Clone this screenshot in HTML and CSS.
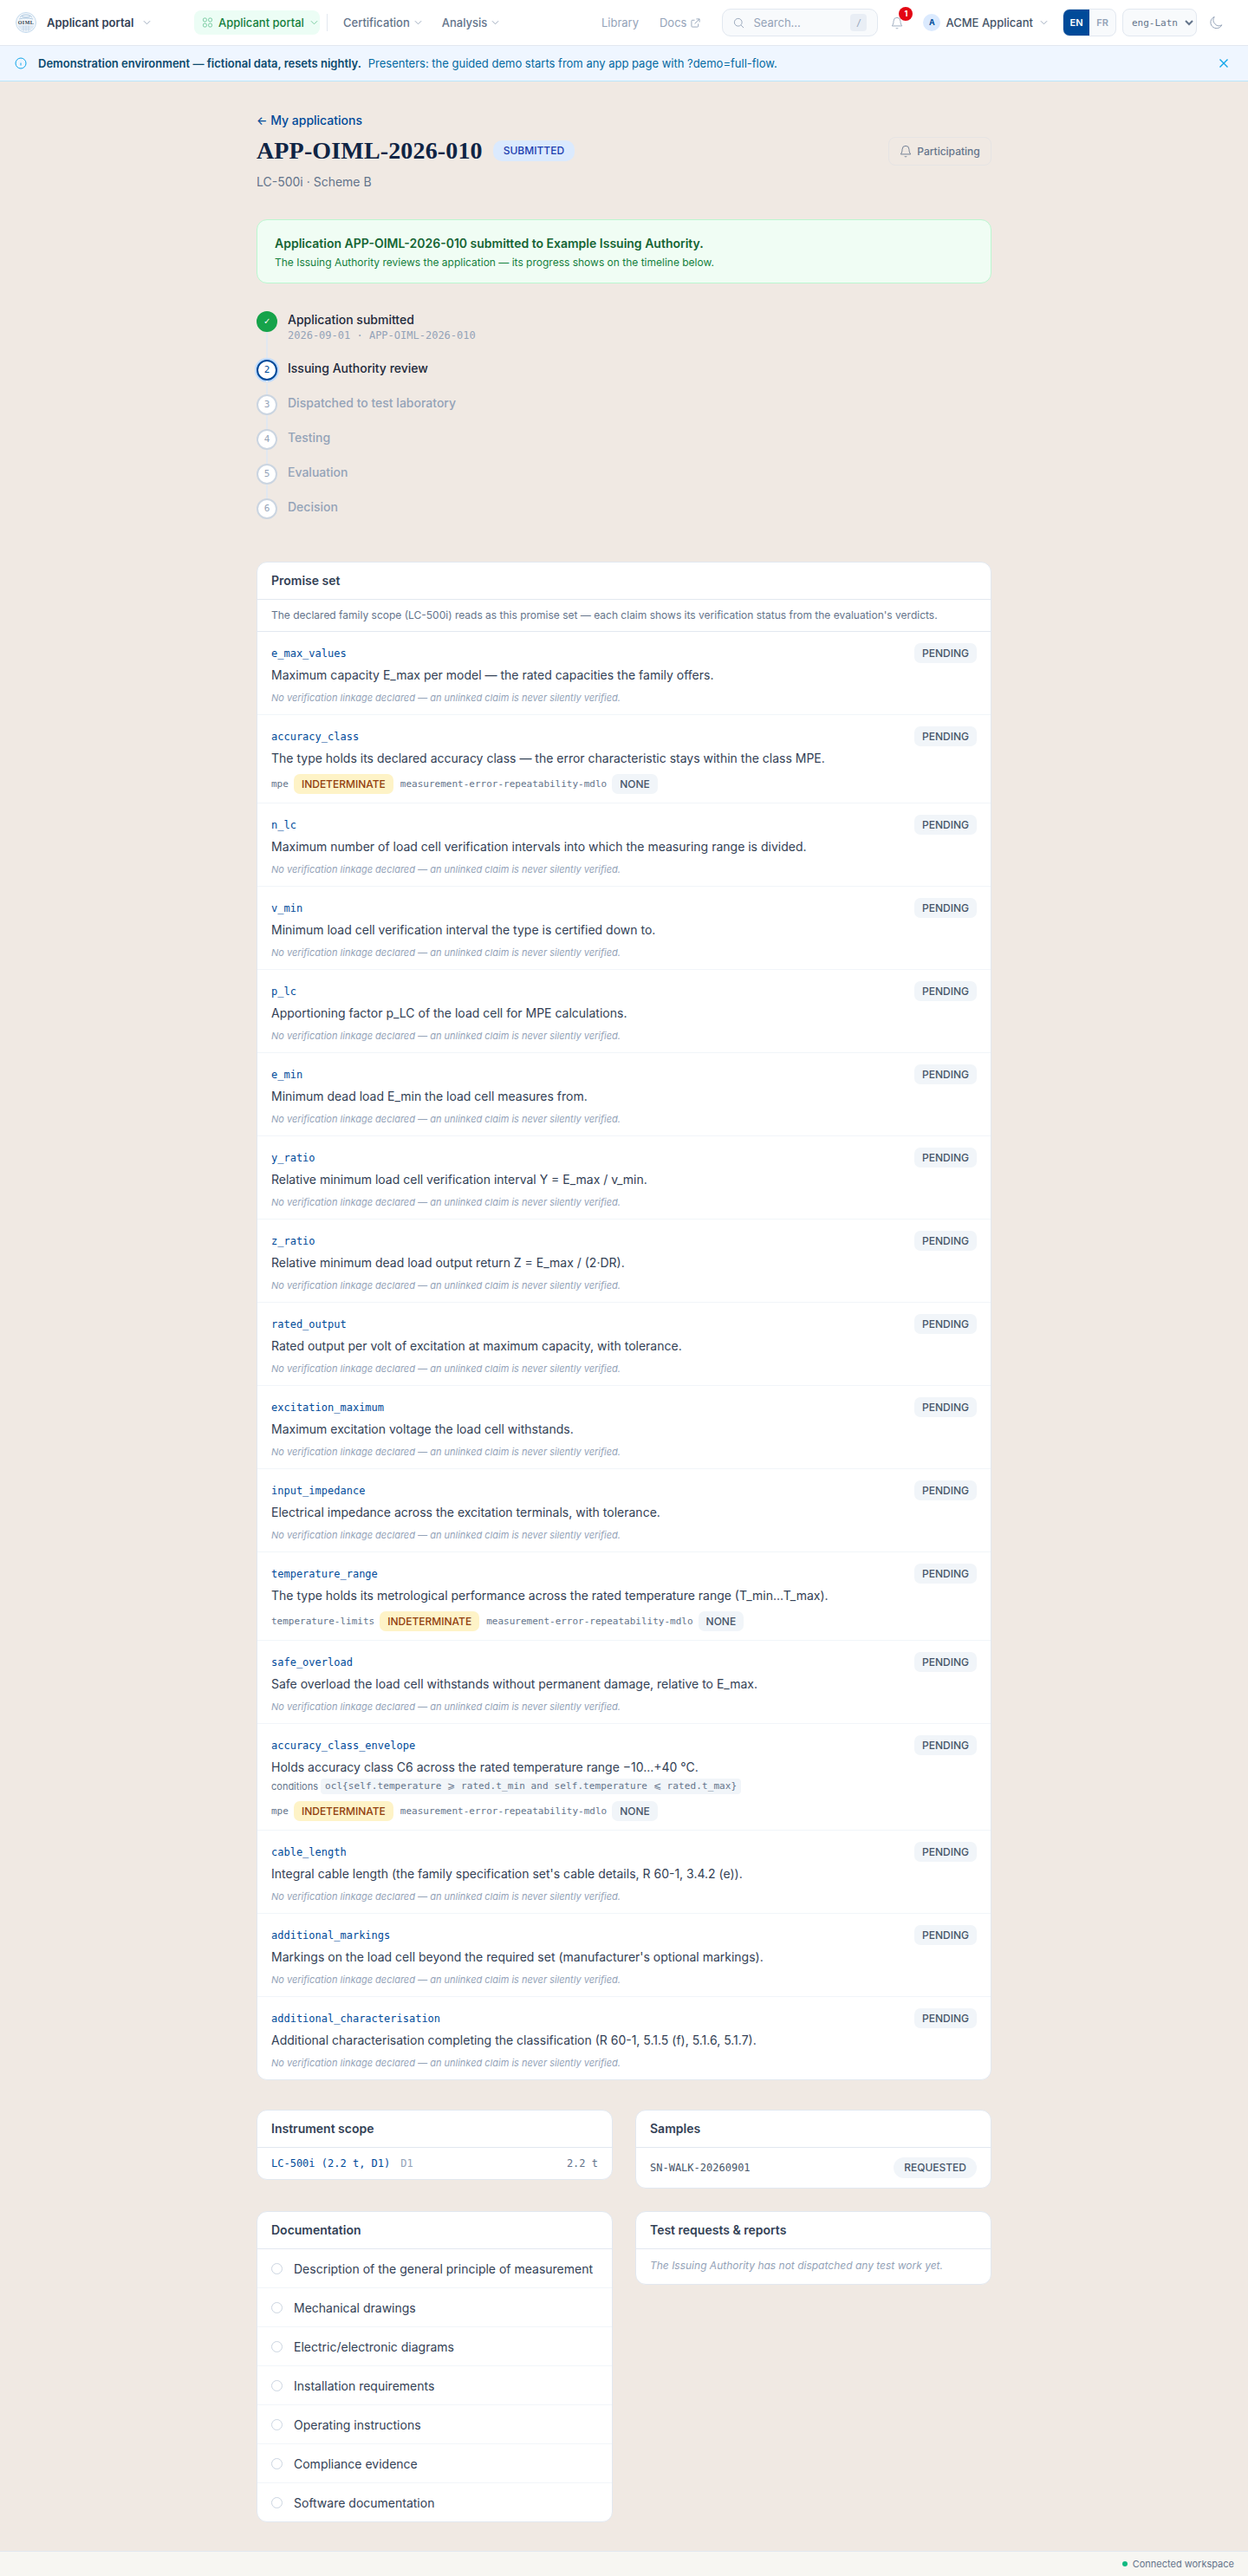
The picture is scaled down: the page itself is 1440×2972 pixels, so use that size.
FILE: index.html
```html
<!DOCTYPE html>
<html lang="en">
<head>
  <meta charset="UTF-8" />
  <meta name="viewport" content="width=device-width, initial-scale=1.0"/>
  <title>APP-OIML-2026-010</title>
  <link rel="stylesheet" href="styles.css">
</head>
<body>

  <header class="topbar">
    <div class="brand">
      <svg class="logo" viewBox="0 0 24 24">
        <circle cx="12" cy="12" r="11.5" fill="#f3f7fb" stroke="#c3d9ec" stroke-width="1"/>
        <path d="M5 6c3-4 11-4 14 0M7 4.500c3 2 7 2 10 0M4 8c4-1.500 12-1.500 16 0" fill="none" stroke="#7fa9cf" stroke-width=".6"/>
        <path d="M3 16h18M4 18h16M6 20h12M9 15.500v6.500M15 15.500v6.500M12 15.500v7" fill="none" stroke="#a5c3de" stroke-width=".5"/>
        <text x="12" y="13.800" text-anchor="middle" class="logo-text">OIML</text>
      </svg>
      <span class="brand-name">Applicant portal</span>
      <svg class="chev" viewBox="0 0 10 6"><path d="M1 1l4 4 4-4"/></svg>
    </div>
    <nav class="mainnav">
      <a class="nav-pill">
        <svg class="pill-icon" viewBox="0 0 14 14"><rect x="1.500" y="1.500" width="4.400" height="4.400" rx="2"/><rect x="8.100" y="1.500" width="4.400" height="4.400" rx="2"/><rect x="1.500" y="8.100" width="4.400" height="4.400" rx="2"/><rect x="8.100" y="8.100" width="4.400" height="4.400" rx="2"/></svg>
        <span>Applicant portal</span>
        <svg class="chev chev-green" viewBox="0 0 10 6"><path d="M1 1l4 4 4-4"/></svg>
      </a>
      <span class="nav-sep"></span>
      <a class="nav-link">Certification <svg class="chev" viewBox="0 0 10 6"><path d="M1 1l4 4 4-4"/></svg></a>
      <a class="nav-link">Analysis <svg class="chev" viewBox="0 0 10 6"><path d="M1 1l4 4 4-4"/></svg></a>
    </nav>
    <div class="topright">
      <a class="quiet-link">Library</a>
      <a class="quiet-link docs-link">Docs
        <svg class="ext" viewBox="0 0 12 12"><path d="M9.500 7v3a1 1 0 0 1-1 1H2a1 1 0 0 1-1-1V3.500a1 1 0 0 1 1-1h3M7 1h4v4M11 1L5 7"/></svg>
      </a>
      <div class="search">
        <svg class="search-icon" viewBox="0 0 14 14"><circle cx="6.200" cy="6.200" r="4.700"/><path d="M9.800 9.800L13 13"/></svg>
        <span class="search-text">Search...</span>
        <kbd class="slash">/</kbd>
      </div>
      <div class="bell-wrap">
        <svg class="bell" viewBox="0 0 16 18"><path d="M3.500 7a4.500 4.500 0 0 1 9 0c0 4 1.500 5.500 2 6.500h-13c.5-1 2-2.500 2-6.500zM6.500 16a1.700 1.700 0 0 0 3 0"/></svg>
        <span class="bell-badge">1</span>
      </div>
      <div class="user">
        <span class="avatar">A</span>
        <span class="user-name">ACME Applicant</span>
        <svg class="chev" viewBox="0 0 10 6"><path d="M1 1l4 4 4-4"/></svg>
      </div>
      <div class="langs"><span class="lang lang-on">EN</span><span class="lang">FR</span></div>
      <select class="script-select"><option>eng-Latn</option></select>
      <svg class="moon" viewBox="0 0 16 16"><path d="M13.800 10.800A6.500 6.500 0 0 1 5.200 1.500a6.800 6.800 0 1 0 8.600 9.300z"/></svg>
    </div>
  </header>

  <div class="banner">
    <svg class="info" viewBox="0 0 14 14"><circle cx="7" cy="7" r="6"/><path d="M7 6.500v3M7 4.500v.1"/></svg>
    <strong>Demonstration environment — fictional data, resets nightly.</strong>
    <span>Presenters: the guided demo starts from any app page with ?demo=full-flow.</span>
    <svg class="close" viewBox="0 0 12 12"><path d="M1.500 1.500l9 9M10.500 1.500l-9 9"/></svg>
  </div>

  <main class="page">
    <a class="back"><span class="back-arrow">←</span> My applications</a>

    <div class="title-row">
      <h1>APP-OIML-2026-010</h1>
      <span class="status-badge">SUBMITTED</span>
      <button class="watch">
        <svg class="watch-bell" viewBox="0 0 16 18"><path d="M3.500 7a4.500 4.500 0 0 1 9 0c0 4 1.500 5.500 2 6.500h-13c.5-1 2-2.500 2-6.500zM6.500 16a1.700 1.700 0 0 0 3 0"/></svg>
        Participating
      </button>
    </div>
    <p class="subtitle">LC-500i · Scheme B</p>

    <div class="success">
      <p class="success-title">Application APP-OIML-2026-010 submitted to Example Issuing Authority.</p>
      <p class="success-sub">The Issuing Authority reviews the application — its progress shows on the timeline below.</p>
    </div>

    <ol class="timeline">
      <li class="step step-done">
        <span class="dot">✓</span>
        <div class="step-body">
          <div class="step-name">Application submitted</div>
          <div class="step-meta">2026-09-01 · APP-OIML-2026-010</div>
        </div>
      </li>
      <li class="step step-now">
        <span class="dot">2</span>
        <div class="step-body"><div class="step-name">Issuing Authority review</div></div>
      </li>
      <li class="step">
        <span class="dot">3</span>
        <div class="step-body"><div class="step-name">Dispatched to test laboratory</div></div>
      </li>
      <li class="step">
        <span class="dot">4</span>
        <div class="step-body"><div class="step-name">Testing</div></div>
      </li>
      <li class="step">
        <span class="dot">5</span>
        <div class="step-body"><div class="step-name">Evaluation</div></div>
      </li>
      <li class="step">
        <span class="dot">6</span>
        <div class="step-body"><div class="step-name">Decision</div></div>
      </li>
    </ol>

    <section class="card promise">
      <h2 class="card-head">Promise set</h2>
      <p class="promise-note">The declared family scope (LC-500i) reads as this promise set — each claim shows its verification status from the evaluation's verdicts.</p>

      <div class="claim">
        <div class="claim-top"><code class="claim-id">e_max_values</code><span class="chip">PENDING</span></div>
        <p class="claim-text">Maximum capacity E_max per model — the rated capacities the family offers.</p>
        <p class="claim-none">No verification linkage declared — an unlinked claim is never silently verified.</p>
      </div>
      <div class="claim">
        <div class="claim-top"><code class="claim-id">accuracy_class</code><span class="chip">PENDING</span></div>
        <p class="claim-text">The type holds its declared accuracy class — the error characteristic stays within the class MPE.</p>
        <div class="links">
          <code class="link-name">mpe</code><span class="chip chip-amber">INDETERMINATE</span>
          <code class="link-name">measurement-error-repeatability-mdlo</code><span class="chip">NONE</span>
        </div>
      </div>
      <div class="claim">
        <div class="claim-top"><code class="claim-id">n_lc</code><span class="chip">PENDING</span></div>
        <p class="claim-text">Maximum number of load cell verification intervals into which the measuring range is divided.</p>
        <p class="claim-none">No verification linkage declared — an unlinked claim is never silently verified.</p>
      </div>
      <div class="claim">
        <div class="claim-top"><code class="claim-id">v_min</code><span class="chip">PENDING</span></div>
        <p class="claim-text">Minimum load cell verification interval the type is certified down to.</p>
        <p class="claim-none">No verification linkage declared — an unlinked claim is never silently verified.</p>
      </div>
      <div class="claim">
        <div class="claim-top"><code class="claim-id">p_lc</code><span class="chip">PENDING</span></div>
        <p class="claim-text">Apportioning factor p_LC of the load cell for MPE calculations.</p>
        <p class="claim-none">No verification linkage declared — an unlinked claim is never silently verified.</p>
      </div>
      <div class="claim">
        <div class="claim-top"><code class="claim-id">e_min</code><span class="chip">PENDING</span></div>
        <p class="claim-text">Minimum dead load E_min the load cell measures from.</p>
        <p class="claim-none">No verification linkage declared — an unlinked claim is never silently verified.</p>
      </div>
      <div class="claim">
        <div class="claim-top"><code class="claim-id">y_ratio</code><span class="chip">PENDING</span></div>
        <p class="claim-text">Relative minimum load cell verification interval Y = E_max / v_min.</p>
        <p class="claim-none">No verification linkage declared — an unlinked claim is never silently verified.</p>
      </div>
      <div class="claim">
        <div class="claim-top"><code class="claim-id">z_ratio</code><span class="chip">PENDING</span></div>
        <p class="claim-text">Relative minimum dead load output return Z = E_max / (2·DR).</p>
        <p class="claim-none">No verification linkage declared — an unlinked claim is never silently verified.</p>
      </div>
      <div class="claim">
        <div class="claim-top"><code class="claim-id">rated_output</code><span class="chip">PENDING</span></div>
        <p class="claim-text">Rated output per volt of excitation at maximum capacity, with tolerance.</p>
        <p class="claim-none">No verification linkage declared — an unlinked claim is never silently verified.</p>
      </div>
      <div class="claim">
        <div class="claim-top"><code class="claim-id">excitation_maximum</code><span class="chip">PENDING</span></div>
        <p class="claim-text">Maximum excitation voltage the load cell withstands.</p>
        <p class="claim-none">No verification linkage declared — an unlinked claim is never silently verified.</p>
      </div>
      <div class="claim">
        <div class="claim-top"><code class="claim-id">input_impedance</code><span class="chip">PENDING</span></div>
        <p class="claim-text">Electrical impedance across the excitation terminals, with tolerance.</p>
        <p class="claim-none">No verification linkage declared — an unlinked claim is never silently verified.</p>
      </div>
      <div class="claim">
        <div class="claim-top"><code class="claim-id">temperature_range</code><span class="chip">PENDING</span></div>
        <p class="claim-text">The type holds its metrological performance across the rated temperature range (T_min...T_max).</p>
        <div class="links">
          <code class="link-name">temperature-limits</code><span class="chip chip-amber">INDETERMINATE</span>
          <code class="link-name">measurement-error-repeatability-mdlo</code><span class="chip">NONE</span>
        </div>
      </div>
      <div class="claim">
        <div class="claim-top"><code class="claim-id">safe_overload</code><span class="chip">PENDING</span></div>
        <p class="claim-text">Safe overload the load cell withstands without permanent damage, relative to E_max.</p>
        <p class="claim-none">No verification linkage declared — an unlinked claim is never silently verified.</p>
      </div>
      <div class="claim">
        <div class="claim-top"><code class="claim-id">accuracy_class_envelope</code><span class="chip">PENDING</span></div>
        <p class="claim-text">Holds accuracy class C6 across the rated temperature range −10...+40 °C.</p>
        <div class="conditions">
          <span class="cond-label">conditions</span><code class="ocl">ocl{self.temperature ⩾ rated.t_min and self.temperature ⩽ rated.t_max}</code>
        </div>
        <div class="links">
          <code class="link-name">mpe</code><span class="chip chip-amber">INDETERMINATE</span>
          <code class="link-name">measurement-error-repeatability-mdlo</code><span class="chip">NONE</span>
        </div>
      </div>
      <div class="claim">
        <div class="claim-top"><code class="claim-id">cable_length</code><span class="chip">PENDING</span></div>
        <p class="claim-text">Integral cable length (the family specification set's cable details, R 60-1, 3.4.2 (e)).</p>
        <p class="claim-none">No verification linkage declared — an unlinked claim is never silently verified.</p>
      </div>
      <div class="claim">
        <div class="claim-top"><code class="claim-id">additional_markings</code><span class="chip">PENDING</span></div>
        <p class="claim-text">Markings on the load cell beyond the required set (manufacturer's optional markings).</p>
        <p class="claim-none">No verification linkage declared — an unlinked claim is never silently verified.</p>
      </div>
      <div class="claim">
        <div class="claim-top"><code class="claim-id">additional_characterisation</code><span class="chip">PENDING</span></div>
        <p class="claim-text">Additional characterisation completing the classification (R 60-1, 5.1.5 (f), 5.1.6, 5.1.7).</p>
        <p class="claim-none">No verification linkage declared — an unlinked claim is never silently verified.</p>
      </div>
    </section>

    <div class="two-col">
      <section class="card">
        <h2 class="card-head">Instrument scope</h2>
        <div class="scope-row">
          <code class="scope-id">LC-500i (2.2 t, D1)</code>
          <code class="scope-class">D1</code>
          <code class="scope-cap">2.2 t</code>
        </div>
      </section>
      <section class="card">
        <h2 class="card-head">Samples</h2>
        <div class="sample-row">
          <code class="sample-id">SN-WALK-20260901</code>
          <span class="chip chip-round">REQUESTED</span>
        </div>
      </section>
    </div>

    <div class="two-col">
      <section class="card">
        <h2 class="card-head">Documentation</h2>
        <ul class="docs">
          <li><span class="ring"></span>Description of the general principle of measurement</li>
          <li><span class="ring"></span>Mechanical drawings</li>
          <li><span class="ring"></span>Electric/electronic diagrams</li>
          <li><span class="ring"></span>Installation requirements</li>
          <li><span class="ring"></span>Operating instructions</li>
          <li><span class="ring"></span>Compliance evidence</li>
          <li><span class="ring"></span>Software documentation</li>
        </ul>
      </section>
      <section class="card">
        <h2 class="card-head">Test requests &amp; reports</h2>
        <p class="empty">The Issuing Authority has not dispatched any test work yet.</p>
      </section>
    </div>
  </main>

  <footer class="foot">
    <span class="foot-dot"></span>Connected workspace
  </footer>

</body>
</html>
```

FILE: styles.css
```css
* {
  box-sizing: border-box;
}
body {
  margin: 0;
  height: 100vh;
  display: flex;
  flex-direction: column;
  font-family: 'Inter', 'Liberation Sans', sans-serif;
  background: #f0e9e3;
  color: #1e293b;
}
p, h1, h2, ol, ul {
  margin: 0;
  padding: 0;
}
code, .step-meta, .dot, .search .slash, .script-select {
  font-family: 'DejaVu Sans Mono', 'Liberation Mono', monospace;
}

/* top bar */
.topbar {
  height: 53px;
  flex: none;
  display: flex;
  align-items: center;
  padding: 0 28px 0 18px;
  background: #fff;
  border-bottom: 1px solid #e2e8f0;
}
.brand {
  display: flex;
  align-items: center;
  width: 206px;
}
.logo {
  width: 24px;
  height: 24px;
  margin-right: 12px;
}
.logo-text {
  font-family: 'Liberation Serif', serif;
  font-size: 6px;
  font-weight: 700;
  letter-spacing: .5px;
  fill: #2b3a4b;
}
.brand-name {
  font-size: 13px;
  font-weight: 600;
  color: #334155;
  margin-right: 11px;
}
.chev {
  flex: none;
  width: 9px;
  height: 6px;
  fill: none;
  stroke: #94a3b8;
  stroke-width: 1;
}
.chev-green {
  stroke: #6fc79a;
  margin-left: 1px;
}
.mainnav {
  display: flex;
  align-items: center;
}
.nav-pill {
  height: 28px;
  width: 145px;
  display: flex;
  align-items: center;
  padding-left: 9px;
  gap: 6px;
  white-space: nowrap;
  border-radius: 8px;
  background: #ecfdf5;
  color: #15803d;
  font-size: 13px;
  font-weight: 500;
}
.pill-icon {
  flex: none;
  width: 13px;
  height: 14px;
  fill: none;
  stroke: #6fc79a;
  stroke-width: 1;
}
.nav-sep {
  width: 1px;
  height: 20px;
  margin: 0 18px 0 8px;
  background: #e2e8f0;
}
.nav-link {
  display: flex;
  align-items: center;
  gap: 5px;
  margin-right: 23px;
  font-size: 13px;
  font-weight: 500;
  color: #64748b;
}
.topright {
  margin-left: auto;
  display: flex;
  align-items: center;
}
.quiet-link {
  font-size: 13px;
  color: #94a3b8;
}
.docs-link {
  display: flex;
  align-items: center;
  gap: 5px;
  margin-left: 24px;
}
.ext {
  width: 11px;
  height: 11px;
  fill: none;
  stroke: #94a3b8;
  stroke-width: 1;
}
.search {
  width: 180px;
  height: 32px;
  margin-left: 25px;
  display: flex;
  align-items: center;
  padding: 0 12px;
  background: #f8fafc;
  border: 1px solid #e2e8f0;
  border-radius: 10px;
}
.search-icon {
  width: 13px;
  height: 13px;
  margin-right: 10px;
  fill: none;
  stroke: #94a3b8;
  stroke-width: 1;
}
.search-text {
  font-size: 13px;
  color: #94a3b8;
}
.slash {
  margin-left: auto;
  width: 19px;
  height: 20px;
  display: flex;
  align-items: center;
  justify-content: center;
  font-size: 10px;
  color: #94a3b8;
  background: #e9eef5;
  border-radius: 4px;
}
.bell-wrap {
  position: relative;
  width: 14px;
  height: 16px;
  margin-left: 15px;
}
.bell {
  display: block;
  width: 14px;
  height: 16px;
  fill: none;
  stroke: #94a3b8;
  stroke-width: 1;
}
.bell-badge {
  position: absolute;
  top: -10px;
  left: 9px;
  width: 16px;
  height: 16px;
  border-radius: 50%;
  background: #e30613;
  color: #fff;
  font-size: 9px;
  font-weight: 700;
  line-height: 16px;
  text-align: center;
}
.user {
  display: flex;
  align-items: center;
  margin-left: 23px;
}
.avatar {
  width: 20px;
  height: 20px;
  margin-right: 6px;
  border-radius: 50%;
  background: #dbeafe;
  color: #004a99;
  font-size: 9px;
  font-weight: 700;
  line-height: 20px;
  text-align: center;
}
.user-name {
  font-size: 13px;
  font-weight: 500;
  color: #475569;
  margin-right: 8px;
}
.langs {
  display: flex;
  width: 62px;
  height: 32px;
  margin-left: 17px;
  overflow: hidden;
  border: 1px solid #e2e8f0;
  border-radius: 8px;
  background: #f8fafc;
}
.lang {
  flex: 1;
  font-size: 11px;
  font-weight: 600;
  line-height: 30px;
  text-align: center;
  color: #94a3b8;
}
.lang-on {
  background: #004a99;
  color: #fff;
}
.script-select {
  width: 86px;
  height: 32px;
  margin-left: 7px;
  padding: 0 4px 0 6px;
  font-size: 11px;
  color: #64748b;
  background: #f8fafc;
  border: 1px solid #e2e8f0;
  border-radius: 8px;
}
.moon {
  width: 16px;
  height: 16px;
  margin-left: 15px;
  fill: none;
  stroke: #94a3b8;
  stroke-width: 1;
}

/* demo banner */
.banner {
  height: 41px;
  flex: none;
  display: flex;
  align-items: center;
  padding: 0 22px 0 17px;
  background: #eff6ff;
  border-bottom: 1px solid #bae6fd;
  font-size: 13px;
  color: #0369a1;
}
.banner strong {
  font-weight: 600;
  color: #0c4a6e;
  margin-right: 8px;
}
.info {
  width: 14px;
  height: 14px;
  margin-right: 13px;
  fill: none;
  stroke: #0ea5e9;
  stroke-width: 1;
}
.close {
  width: 12px;
  height: 12px;
  margin-left: auto;
  fill: none;
  stroke: #0ea5e9;
  stroke-width: 1.400;
}

/* page */
.page {
  flex: 1;
  width: 848px;
  margin: 0 auto;
  padding-top: 35px;
}
.back {
  display: block;
  font-size: 14px;
  font-weight: 500;
  line-height: 20px;
  color: #004a99;
}
.back-arrow {
  font-size: 13px;
}
.title-row {
  display: flex;
  align-items: center;
  margin-top: 7px;
  height: 36px;
}
h1 {
  font-family: 'Liberation Serif', serif;
  font-size: 28px;
  font-weight: 700;
  letter-spacing: .15px;
  color: #0f2444;
}
.status-badge {
  margin-left: 12px;
  padding: 0 12px;
  height: 24px;
  line-height: 24px;
  border-radius: 10px;
  background: #dbeafe;
  color: #1e40af;
  font-size: 12px;
  font-weight: 500;
}
.watch {
  margin-left: auto;
  height: 33px;
  width: 119px;
  display: flex;
  align-items: center;
  justify-content: center;
  gap: 6px;
  padding: 0;
  background: transparent;
  border: 1px solid #e6e4e4;
  border-radius: 8px;
  font-family: inherit;
  font-size: 12px;
  font-weight: 500;
  color: #64748b;
}
.watch-bell {
  width: 14px;
  height: 16px;
  fill: none;
  stroke: #64748b;
  stroke-width: 1;
}
.subtitle {
  margin-top: 8px;
  font-size: 14px;
  line-height: 20px;
  color: #64748b;
}
.success {
  margin-top: 33px;
  height: 74px;
  padding: 17px 20px 0;
  background: #f0fdf4;
  border: 1px solid #bbf7d0;
  border-radius: 12px;
}
.success-title {
  font-size: 14px;
  font-weight: 600;
  line-height: 20px;
  color: #166534;
}
.success-sub {
  margin-top: 3px;
  font-size: 12px;
  line-height: 17px;
  color: #15803d;
}

/* timeline */
.timeline {
  list-style: none;
  margin-top: 32px;
}
.step {
  position: relative;
  display: flex;
  gap: 12px;
  height: 40px;
}
.step-done {
  height: 56px;
}
.step:not(:last-child)::before {
  content: "";
  position: absolute;
  left: 11px;
  top: 24px;
  bottom: 0;
  width: 2px;
  background: #e2e8f0;
}
.dot {
  flex: none;
  width: 24px;
  height: 24px;
  border-radius: 50%;
  background: #fff;
  border: 2px solid #cbd5e1;
  color: #94a3b8;
  font-size: 11px;
  line-height: 20px;
  text-align: center;
}
.step-done .dot {
  background: #16a34a;
  border-color: #16a34a;
  color: #fff;
}
.step-now .dot {
  border-color: #004a99;
  color: #004a99;
  box-shadow: 0 0 0 2px #bfdbfe;
}
.step-name {
  font-size: 14px;
  font-weight: 500;
  line-height: 20px;
  color: #94a3b8;
}
.step-done .step-name, .step-now .step-name {
  color: #1e293b;
}
.step-meta {
  font-size: 12px;
  line-height: 16px;
  color: #94a3b8;
}

/* cards */
.card {
  background: #fff;
  border: 1px solid #e2e8f0;
  border-radius: 12px;
  overflow: hidden;
}
.card-head {
  height: 43px;
  padding: 0 16px;
  font-size: 14px;
  font-weight: 600;
  line-height: 42px;
  color: #334155;
  border-bottom: 1px solid #e2e8f0;
}
.promise {
  margin-top: 33px;
}
.promise-note {
  height: 37px;
  padding: 0 16px;
  font-size: 12px;
  line-height: 36px;
  color: #64748b;
  border-bottom: 1px solid #e2e8f0;
}
.claim {
  padding: 13px 16px 11px;
  border-bottom: 1px solid #f1f5f9;
}
.claim:last-child {
  border-bottom: 0;
}
.claim-top {
  display: flex;
  align-items: center;
  justify-content: space-between;
  height: 23px;
}
.claim-id {
  font-size: 12px;
  font-weight: 500;
  color: #004a99;
}
.chip {
  height: 23px;
  padding: 0 9px;
  border-radius: 7px;
  background: #f1f5f9;
  color: #475569;
  font-size: 12px;
  font-weight: 500;
  line-height: 23px;
}
.claim-text {
  margin-top: 4px;
  font-size: 14px;
  line-height: 20px;
  color: #334155;
}
.claim-none {
  margin-top: 8px;
  font-size: 11px;
  font-style: italic;
  line-height: 16px;
  color: #94a3b8;
}
.links {
  display: flex;
  align-items: center;
  gap: 6px;
  margin-top: 8px;
  margin-bottom: -1px;
  height: 23px;
}
.link-name {
  font-size: 11px;
  color: #64748b;
}
.chip-amber {
  background: #fef3c7;
  color: #92400e;
  margin-right: 2px;
}
.conditions {
  display: flex;
  align-items: center;
  gap: 3px;
  margin-top: 3px;
  height: 18px;
}
.conditions + .links {
  margin-top: 8px;
}
.cond-label {
  font-size: 11px;
  color: #64748b;
}
.ocl {
  padding: 0 5px;
  height: 18px;
  font-size: 11px;
  letter-spacing: .1px;
  line-height: 18px;
  color: #64748b;
  background: #f1f5f9;
  border-radius: 4px;
}
.two-col {
  display: grid;
  grid-template-columns: 1fr 1fr;
  gap: 26px;
  align-items: start;
  margin-top: 26px;
}
.promise + .two-col {
  margin-top: 34px;
}
.scope-row {
  display: flex;
  align-items: center;
  height: 36px;
  padding: 0 16px;
}
.scope-id {
  font-size: 12px;
  color: #004a99;
}
.scope-class {
  margin-left: 12px;
  font-size: 12px;
  color: #94a3b8;
}
.scope-cap {
  margin-left: auto;
  font-size: 12px;
  color: #64748b;
}
.sample-row {
  display: flex;
  align-items: center;
  justify-content: space-between;
  height: 46px;
  padding: 0 16px;
}
.sample-id {
  font-size: 12px;
  color: #475569;
}
.chip-round {
  height: 24px;
  line-height: 24px;
  padding: 0 12px;
  border-radius: 12px;
}
.docs {
  list-style: none;
}
.docs li {
  display: flex;
  align-items: center;
  height: 45px;
  padding: 0 16px;
  font-size: 14px;
  color: #334155;
  border-bottom: 1px solid #f1f5f9;
}
.docs li:last-child {
  height: 44px;
  border-bottom: 0;
}
.ring {
  flex: none;
  width: 13px;
  height: 13px;
  margin-right: 13px;
  border: 1.500px solid #cbd5e1;
  border-radius: 50%;
}
.empty {
  padding: 11px 16px 0;
  height: 40px;
  font-size: 12px;
  font-style: italic;
  color: #94a3b8;
}

/* footer */
.foot {
  height: 29px;
  flex: none;
  display: flex;
  align-items: center;
  justify-content: flex-end;
  padding-right: 16px;
  background: #f7f6f2;
  border-top: 1px solid #e2e8f0;
  font-size: 11px;
  color: #64748b;
}
.foot-dot {
  width: 6px;
  height: 6px;
  margin-right: 6px;
  border-radius: 50%;
  background: #10b981;
}
```
